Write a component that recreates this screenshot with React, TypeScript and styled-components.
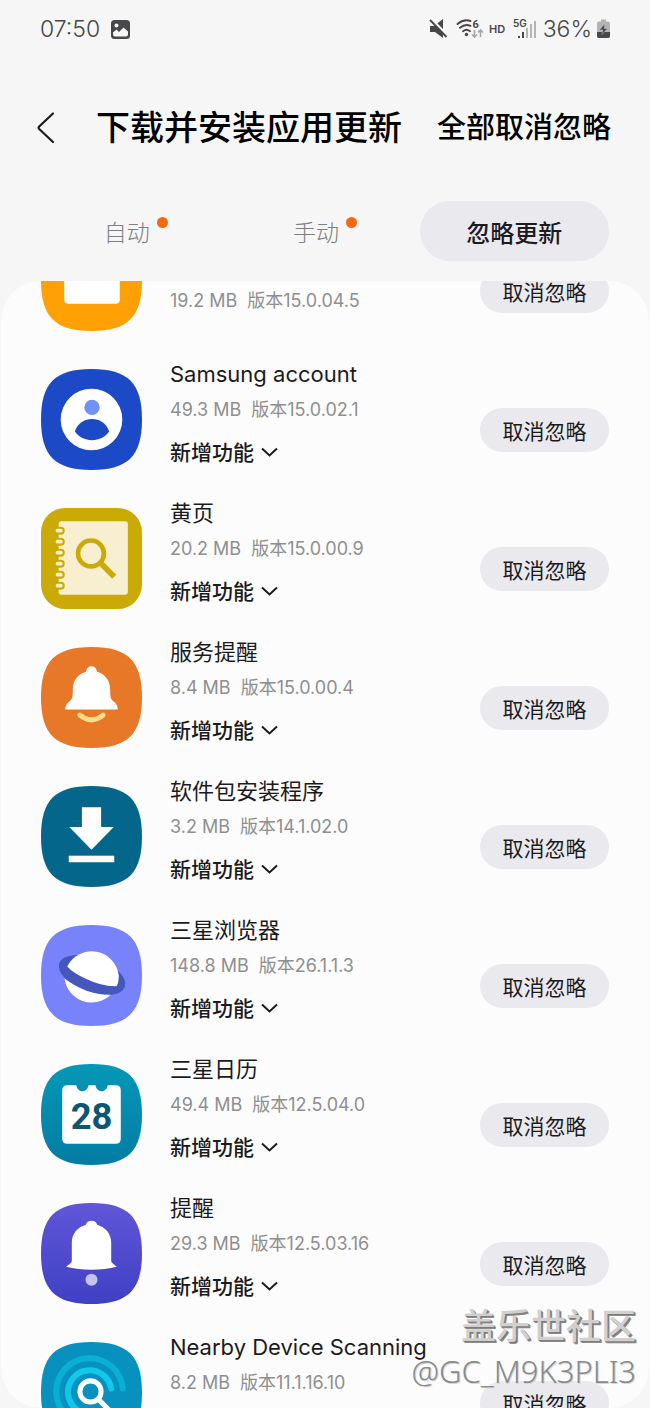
import React from 'react';
import styled, { createGlobalStyle } from 'styled-components';

const GlobalStyle = createGlobalStyle`
  * { box-sizing: border-box; }
  body {
    margin: 0;
    background: #f6f6f6;
    color: #1b1b1d;
    font-family: Inter, "Noto Sans CJK SC", sans-serif;
  }
  button { border: 0; background: none; padding: 0; color: inherit; font: inherit; cursor: pointer; white-space: nowrap; }
`;

const Screen = styled.div`
  position: relative;
  display: flex;
  flex-direction: column;
  height: 100vh;
  overflow: hidden;
`;

const StatusBar = styled.div`
  display: flex;
  align-items: center;
  justify-content: space-between;
  height: 58px;
  padding: 0 40px;
  color: #48484a;
  font-size: 23px;
  font-weight: 300;
`;

const StatusGroup = styled.div<{ $gap: number }>`
  display: flex;
  align-items: center;
  gap: ${(p) => p.$gap}px;
`;

const Header = styled.header`
  display: flex;
  align-items: center;
  height: 140px;
  padding: 0 39px 0 36px;
`;

const BackButton = styled.button`
  display: flex;
  width: 60px;
`;

const Title = styled.h1`
  flex: 1;
  margin: 0;
  color: #000;
  font-size: 34px;
  font-weight: 500;
  line-height: 48px;
  white-space: nowrap;
`;

const HeaderAction = styled.button`
  color: #000;
  font-size: 29px;
  font-weight: 500;
  line-height: 48px;
`;

const Tabs = styled.div`
  display: grid;
  grid-template-columns: repeat(3, 1fr);
  padding: 3px 41px 20px;
`;

const Tab = styled.button<{ $active?: boolean }>`
  display: flex;
  align-items: center;
  justify-content: center;
  gap: 7px;
  height: 60px;
  border-radius: 30px;
  font-size: ${(p) => (p.$active ? 24 : 23)}px;
  font-weight: ${(p) => (p.$active ? 500 : 300)};
  color: ${(p) => (p.$active ? '#1b1b20' : '#808080')};
  background: ${(p) => (p.$active ? '#e9e9ee' : 'transparent')};
`;

const Dot = styled.span`
  width: 11px;
  height: 11px;
  margin-bottom: 18px;
  border-radius: 50%;
  background: #f26a12;
`;

const Panel = styled.main`
  flex: 1;
  min-height: 0;
  margin: 0 1px;
  overflow: hidden;
  border-radius: 40px;
  background: #fcfcfc;
`;

const List = styled.ul`
  margin: -70px 0 0;
  padding: 0;
  list-style: none;
`;

const Row = styled.li`
  display: flex;
  align-items: flex-start;
  gap: 28px;
  height: 139px;
  padding: 0 40px;
`;

const AppIcon = styled.svg`
  flex: none;
  width: 101px;
  height: 101px;
  margin-top: 19px;
`;

const Info = styled.div<{ $compact: boolean }>`
  flex: 1;
  min-width: 0;
  padding-top: ${(p) => (p.$compact ? 39 : 9)}px;
  white-space: nowrap;
`;

const AppName = styled.h2`
  margin: 0;
  font-size: 22px;
  font-weight: 400;
  line-height: 30px;
`;

const Meta = styled.p`
  display: flex;
  gap: 10px;
  margin: 9px 0 17px;
  color: #8f8f8f;
  font-size: 18px;
  line-height: 24px;
`;

const FeatureButton = styled.button`
  display: flex;
  align-items: center;
  gap: 7px;
  font-size: 21px;
  font-weight: 500;
  line-height: 28px;
`;

const UnignoreButton = styled.button`
  flex: none;
  width: 129px;
  height: 44px;
  margin-top: 58px;
  border-radius: 22px;
  background: #e9e9ee;
  font-size: 21px;
`;

const Watermark = styled.div`
  position: absolute;
  right: 14px;
  bottom: 15px;
  text-align: right;
  pointer-events: none;
  white-space: nowrap;
`;

const WatermarkName = styled.div`
  color: #d2d0cf;
  font-size: 35px;
  font-weight: 500;
  line-height: 46px;
  text-shadow: 1px 1px 0 #7c7a7a, 2px 2px 0 #8c8a8a;
`;

const WatermarkUser = styled.div`
  color: #8a8a8a;
  font-family: "Noto Sans", sans-serif;
  font-size: 31px;
  font-weight: 300;
  line-height: 44px;
  text-shadow: 1px 1px 0 #d6d6d6;
`;

const SQUIRCLE = 'M50 0C86 0 100 14 100 50S86 100 50 100 0 86 0 50 14 0 50 0Z';

const Art: Record<string, React.ReactNode> = {
  files: (
    <>
      <path d={SQUIRCLE} fill="#ffa004" />
      <rect x="23" y="26" width="55" height="47" rx="4" fill="#fff" />
    </>
  ),
  account: (
    <>
      <path d={SQUIRCLE} fill="#1c4ac6" />
      <circle cx="50" cy="50" r="30.5" fill="#fff" />
      <circle cx="50.5" cy="38" r="7.6" fill="#7190f8" />
      <path d="M33.500 62C36 54 43 49.500 50.500 49.500S65 54 67.500 62C63.500 67.500 57.500 70.500 50.500 70.500S37.500 67.500 33.500 62Z" fill="#1c4ac6" />
    </>
  ),
  pages: (
    <>
      <rect width="100" height="100" rx="24" fill="#cbaa06" />
      <path d="M20 13H83Q86 13 86 16V83Q86 86 83 86H20Q17.500 86 17.500 83V16Q17.500 13 20 13Z" fill="#f8efd0" />
      {[22.5, 33.4, 44.3, 55.2, 66.1, 77].map((y) => (
        <g key={y}>
          <rect x="13" y={y - 4} width="10.500" height="8" rx="4" fill="#cbaa06" />
          <rect x="14.500" y={y - 2} width="7" height="3.800" rx="1.900" fill="#f8efd0" />
        </g>
      ))}
      <circle cx="49.500" cy="45" r="12.800" fill="none" stroke="#cbaa06" strokeWidth="4.600" />
      <path d="M58.500 54L72.500 68" stroke="#cbaa06" strokeWidth="5.600" />
    </>
  ),
  service: (
    <>
      <path d={SQUIRCLE} fill="#e67828" />
      <path d="M50 19C53 19 55 21 55.500 24.500C63 26.500 68.500 33 68.500 42C68.500 50 69 51.500 72 54C74.500 56 76 58.500 76 62H24C24 58.500 25.500 56 28 54C31 51.500 31.500 50 31.500 42C31.500 33 37 26.500 44.500 24.500C45 21 47 19 50 19Z" fill="#fff" />
      <path d="M38.500 67.500Q50 77 61.500 67.500" fill="none" stroke="#ffdc8c" strokeWidth="5" strokeLinecap="round" />
    </>
  ),
  installer: (
    <>
      <path d={SQUIRCLE} fill="#04668a" />
      <path d="M40.500 21H59.500V40.500H72L50 63 28 40.500H40.500Z" fill="#fff" />
      <rect x="27.500" y="69" width="45" height="6.500" fill="#fff" />
    </>
  ),
  browser: (
    <>
      <path d={SQUIRCLE} fill="#7883fb" />
      <ellipse cx="50.500" cy="49.500" rx="34.500" ry="17" transform="rotate(20 50.500 49.500)" fill="#4557bd" />
      <path d="M26 41A27 27 0 0 1 77 50Q77 57 75 60.500Q60 61 45 53.500Q31 47 26 41Z" fill="#fff" />
      <path d="M23.300 53Q33 60.500 45 65Q58 69.500 69 69A27 27 0 0 1 23.300 53Z" fill="#fff" />
    </>
  ),
  calendar: (
    <>
      <defs>
        <linearGradient id="calendar-bg" x1="0" y1="0" x2="0" y2="1">
          <stop offset="0" stopColor="#0598b6" />
          <stop offset="1" stopColor="#047ca4" />
        </linearGradient>
      </defs>
      <path d={SQUIRCLE} fill="url(#calendar-bg)" />
      <path d="M26 21H35C35.500 24.500 38 27 41 27S46.500 24.500 47 21H54C54.500 24.500 57 27 60 27S65.500 24.500 66 21H74Q79 21 79 26V74Q79 79 74 79H26Q21 79 21 74V26Q21 21 26 21Z" fill="#fff" />
      <text x="50" y="64" textAnchor="middle" fontFamily="Roboto, sans-serif" fontSize="36" fontWeight="700" fill="#0c5674">28</text>
    </>
  ),
  reminder: (
    <>
      <defs>
        <linearGradient id="reminder-bg" x1="0" y1="0" x2="0" y2="1">
          <stop offset="0" stopColor="#6056d8" />
          <stop offset="1" stopColor="#4040c4" />
        </linearGradient>
      </defs>
      <path d={SQUIRCLE} fill="url(#reminder-bg)" />
      <path d="M50 17.500C53 17.500 55 19 55.500 21.500C64 24 69.500 30.500 69.500 39V57C69.500 59.500 72 60.500 75 63C60 67 40 67 25 63C28 60.500 30.500 59.500 30.500 57V39C30.500 30.500 36 24 44.500 21.500C45 19 47 17.500 50 17.500Z" fill="#fff" />
      <circle cx="50" cy="76" r="6" fill="#c4c4f2" />
    </>
  ),
  nearby: (
    <>
      <path d={SQUIRCLE} fill="#0890be" />
      <path d="M81 46A33 33 0 1 0 50 82" fill="none" stroke="#08b0d6" strokeWidth="6" strokeLinecap="round" />
      <path d="M69.500 46A21.500 21.500 0 1 0 50 71" fill="none" stroke="#12c8ea" strokeWidth="6" strokeLinecap="round" />
      <circle cx="49" cy="49" r="10.500" fill="none" stroke="#fff" strokeWidth="5" />
      <path d="M57 57L74 74" stroke="#fff" strokeWidth="5" />
    </>
  ),
};

const apps = [
  { id: 'files', name: '我的文件', size: '19.2 MB', version: '15.0.04.5', hasNews: false },
  { id: 'account', name: 'Samsung account', size: '49.3 MB', version: '15.0.02.1', hasNews: true },
  { id: 'pages', name: '黄页', size: '20.2 MB', version: '15.0.00.9', hasNews: true },
  { id: 'service', name: '服务提醒', size: '8.4 MB', version: '15.0.00.4', hasNews: true },
  { id: 'installer', name: '软件包安装程序', size: '3.2 MB', version: '14.1.02.0', hasNews: true },
  { id: 'browser', name: '三星浏览器', size: '148.8 MB', version: '26.1.1.3', hasNews: true },
  { id: 'calendar', name: '三星日历', size: '49.4 MB', version: '12.5.04.0', hasNews: true },
  { id: 'reminder', name: '提醒', size: '29.3 MB', version: '12.5.03.16', hasNews: true },
  { id: 'nearby', name: 'Nearby Device Scanning', size: '8.2 MB', version: '11.1.16.10', hasNews: true },
];

const PictureIcon = () => (
  <svg width="19" height="19" viewBox="0 0 19 19">
    <rect width="19" height="19" rx="3.500" fill="#48484a" />
    <circle cx="5.500" cy="5.500" r="2" fill="#f6f6f6" />
    <path d="M2 14V12.500L5.500 9.500 8 12 12.500 7.500 17 11.500V14.500Q17 16.500 15 16.500H4Q2 16.500 2 14Z" fill="#f6f6f6" />
  </svg>
);

const StatusIcons = () => (
  <svg width="109" height="24" viewBox="0 0 109 24" fill="none">
    {/* muted speaker */}
    <path d="M1 9H5L14 2V21L6 15H1Z" fill="#48484a" />
    <path d="M2 1.500L19 19.500" stroke="#f6f6f6" strokeWidth="2.600" />
    <path d="M1 3L17.500 20" stroke="#48484a" strokeWidth="1.800" />
    {/* wifi */}
    <g stroke="#48484a" strokeWidth="1.900" strokeLinecap="round">
      <path d="M28.500 7Q34.500 1.500 41.500 4" />
      <path d="M31 10.800Q36 6.500 41.500 8.800" />
      <path d="M34 14.200Q37.500 11.500 41 14.200" />
    </g>
    <circle cx="37.500" cy="17.500" r="1.700" fill="#48484a" />
    <text x="43.500" y="11" fontFamily="Roboto, sans-serif" fontSize="11" fontWeight="700" fill="#48484a">6</text>
    <path d="M45.500 13V19.500M43 17.500L45.500 20 48 17.500M51.500 20V13.500M49 15.500L51.500 13 54 15.500" stroke="#a6a6a8" strokeWidth="1.600" />
    <text x="60" y="16" fontFamily="Inter, sans-serif" fontSize="11" fontWeight="600" fill="#48484a">HD</text>
    {/* mobile signal */}
    <text x="84" y="10" fontFamily="Inter, sans-serif" fontSize="10" fontWeight="600" fill="#48484a">5G</text>
    <rect x="89" y="19" width="2" height="2" fill="#48484a" />
    <rect x="93" y="15" width="2" height="6" fill="#48484a" />
    <rect x="97" y="11" width="2" height="10" fill="#b4b4b6" />
    <rect x="101" y="7" width="2" height="14" fill="#b4b4b6" />
    <rect x="105" y="4" width="2" height="17" fill="#b4b4b6" />
  </svg>
);

const BatteryIcon = () => (
  <svg width="13" height="20" viewBox="0 0 13 20">
    <path d="M4 0.500H9V2.500H11Q13 2.500 13 4.500V17Q13 19 11 19H2Q0 19 0 17V4.500Q0 2.500 2 2.500H4Z" fill="#b4b4b6" />
    <path d="M0 13H13V17Q13 19 11 19H2Q0 19 0 17Z" fill="#48484a" />
    <path d="M7.500 5L2.500 11H5.800L5 15.500 10.500 9.500H7.200Z" fill="#48484a" stroke="#b4b4b6" strokeWidth="0.500" />
  </svg>
);

export default function App() {
  return (
    <Screen>
      <GlobalStyle />
      <StatusBar>
        <StatusGroup $gap={11}>
          <span>07:50</span>
          <PictureIcon />
        </StatusGroup>
        <StatusGroup $gap={5}>
          <StatusIcons />
          <span>36%</span>
          <BatteryIcon />
        </StatusGroup>
      </StatusBar>
      <Header>
        <BackButton aria-label="返回">
          <svg width="20" height="34" viewBox="0 0 20 34" fill="none">
            <path d="M17 2.500L3.200 15.500Q2 16.800 3.200 18L17 31" stroke="#1b1b1d" strokeWidth="2.200" strokeLinecap="round" />
          </svg>
        </BackButton>
        <Title>下载并安装应用更新</Title>
        <HeaderAction>全部取消忽略</HeaderAction>
      </Header>
      <Tabs role="tablist">
        <Tab role="tab" aria-selected={false}>自动<Dot /></Tab>
        <Tab role="tab" aria-selected={false}>手动<Dot /></Tab>
        <Tab role="tab" aria-selected $active>忽略更新</Tab>
      </Tabs>
      <Panel>
        <List>
          {apps.map((app) => (
            <Row key={app.id}>
              <AppIcon viewBox="0 0 100 100" aria-hidden="true">{Art[app.id]}</AppIcon>
              <Info $compact={!app.hasNews}>
                <AppName>{app.name}</AppName>
                <Meta>
                  <span>{app.size}</span>
                  <span>版本{app.version}</span>
                </Meta>
                {app.hasNews && (
                  <FeatureButton>
                    新增功能
                    <svg width="17" height="12" viewBox="0 0 17 12" fill="none">
                      <path d="M1 1.500L8.500 8.500 16 1.500" stroke="#1b1b1d" strokeWidth="2" />
                    </svg>
                  </FeatureButton>
                )}
              </Info>
              <UnignoreButton>取消忽略</UnignoreButton>
            </Row>
          ))}
        </List>
      </Panel>
      <Watermark>
        <WatermarkName>盖乐世社区</WatermarkName>
        <WatermarkUser>@GC_M9K3PLI3</WatermarkUser>
      </Watermark>
    </Screen>
  );
}
